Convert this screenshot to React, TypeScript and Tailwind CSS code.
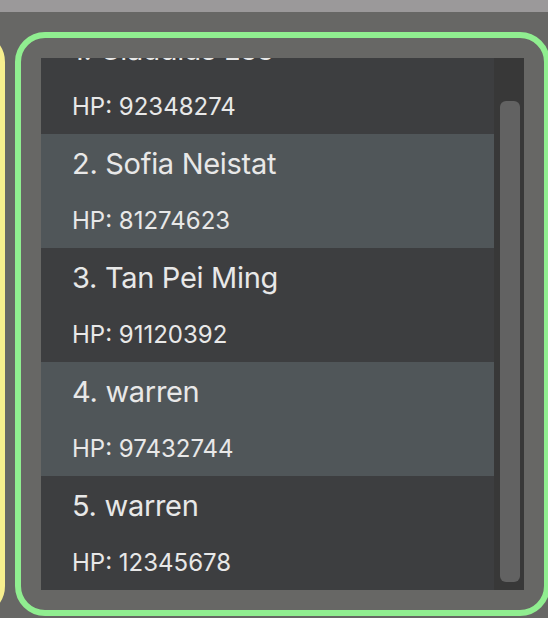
import React from 'react';

const contacts = [
  { name: 'Claudius Lee', phone: '92348274' },
  { name: 'Sofia Neistat', phone: '81274623' },
  { name: 'Tan Pei Ming', phone: '91120392' },
  { name: 'warren', phone: '97432744' },
  { name: 'warren', phone: '12345678' },
];

export default function App() {
  return (
    <div className="w-[548px] h-[618px] overflow-hidden bg-[#676765] flex flex-col" style={{ fontFamily: 'Inter, "Noto Sans", sans-serif' }}>
      <div className="h-[12px] shrink-0 bg-[#9b999a]" />
      <div className="flex gap-[10px] pt-[20px]">
        {/* edge of the neighbouring panel */}
        <div className="w-[100px] h-[584px] shrink-0 -ml-[95px] border-[5px] border-[#f7ef8e] rounded-[30px]" />

        <div className="w-[535px] h-[584px] shrink-0 border-[6px] border-[#90ee90] rounded-[30px] p-[20px]">
          <div className="flex h-[532px] w-[483px]">
            <div className="w-[453px] overflow-hidden">
              {/* list is scrolled down a little */}
              <div className="-mt-[38px]">
                {contacts.map((c, i) => (
                  <div
                    key={i}
                    className={`h-[114px] pt-[12px] pl-[31px] text-[#e8e8e8] ${i % 2 === 0 ? 'bg-[#3d3e40]' : 'bg-[#505659]'}`}
                  >
                    <div className="text-[29px] leading-[36px] tracking-[-0.3px]">
                      {i + 1}. {c.name}
                    </div>
                    <div className="mt-[24px] text-[24px] leading-[30px]">HP: {c.phone}</div>
                  </div>
                ))}
              </div>
            </div>
            <div className="w-[30px] bg-[#383838] pt-[43px] pb-[8px] pl-[6px] pr-[4px]">
              <div className="h-full w-[20px] rounded-[6px] bg-[#626262]" />
            </div>
          </div>
        </div>
      </div>
    </div>
  );
}
